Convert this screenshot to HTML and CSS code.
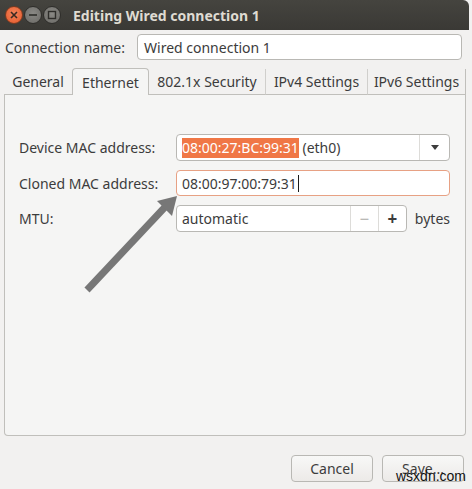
FILE: index.html
```html
<!DOCTYPE html>
<html>
<head>
<meta charset="utf-8">
<link rel="stylesheet" href="styles.css">
</head>
<body>
<div class="window">
  <div class="titlebar">
    <div class="wbtns">
      <span class="wb close"><svg width="8" height="8" viewBox="0 0 8 8"><path d="M1 1L7 7M7 1L1 7" stroke="#3a2a22" stroke-width="1.6"/></svg></span>
      <span class="wb"><svg width="10" height="8" viewBox="0 0 10 8"><path d="M1 4H9" stroke="#2e2d2a" stroke-width="1.6"/></svg></span>
      <span class="wb"><svg width="10" height="10" viewBox="0 0 10 10"><rect x="1.5" y="1.5" width="7" height="7" fill="none" stroke="#2e2d2a" stroke-width="1.4"/></svg></span>
    </div>
    <div class="title">Editing Wired connection 1</div>
  </div>
  <div class="body">
    <div class="namerow">
      <span class="lbl">Connection name:</span>
      <div class="entry name">Wired connection 1</div>
    </div>
    <div class="tabs">
      <div class="tab">General</div>
      <div class="tab active">Ethernet</div>
      <div class="tab">802.1x Security</div>
      <div class="tab sep">IPv4 Settings</div>
      <div class="tab sep">IPv6 Settings</div>
    </div>
    <div class="panel">
      <div class="form">
        <span class="lbl">Device MAC address:</span>
        <div class="combo">
          <div class="combo-text"><span class="sel">08:00:27:BC:99:31</span> (eth0)</div>
          <div class="combo-arrow"><svg width="10" height="6" viewBox="0 0 10 6"><path d="M1 0H9L5 5Z" fill="#3c3c3c"/></svg></div>
        </div>
        <span class="lbl">Cloned MAC address:</span>
        <div class="entry focus">08:00:97:00:79:31<span class="caret"></span></div>
        <span class="lbl">MTU:</span>
        <div class="spinrow">
          <div class="spin">
            <div class="spin-text">automatic</div>
            <div class="spin-btn minus">&#8722;</div>
            <div class="spin-btn plus">+</div>
          </div>
          <span class="unit">bytes</span>
        </div>
      </div>
    </div>
    <div class="actions">
      <div class="btn">Cancel</div>
      <div class="btn">Save...</div>
    </div>
  </div>
  <svg class="annot" width="472" height="489" viewBox="0 0 472 489">
    <line x1="87" y1="290" x2="166" y2="206" stroke="#777777" stroke-width="7"/>
    <polygon points="177,196 157,201 172,216" fill="#777777"/>
  </svg>
  <div class="wm">wsxdn.com</div>
</div>
</body>
</html>
```

FILE: styles.css
```css
* { box-sizing: border-box; }
html, body { margin: 0; padding: 0; }
body {
  font-family: "Noto Sans", "DejaVu Sans", sans-serif;
  font-size: 14px;
  color: #3c3c3c;
  background: #f2f1f0;
}
.window {
  position: relative;
  width: 472px;
  height: 489px;
  background: #f2f1f0;
  overflow: hidden;
}
.titlebar {
  height: 30px;
  width: 469px;
  background: linear-gradient(#45443f, #3a3935);
  border-top-right-radius: 6px;
  display: flex;
  align-items: center;
}
.wbtns {
  display: flex;
  gap: 1px;
  padding-left: 5px;
  width: 73px;
}
.wb {
  width: 18px;
  height: 18px;
  border-radius: 50%;
  background: radial-gradient(circle at 50% 40%, #8a8985, #6a6965);
  border: 1px solid #2f2e2b;
  display: flex;
  align-items: center;
  justify-content: center;
}
.wb.close {
  background: radial-gradient(circle at 50% 40%, #f4845a, #e4582a);
  border-color: #7a3a20;
}
.title {
  color: #dfdbd2;
  font-weight: bold;
  font-size: 14px;
}
.body {
  padding: 4px 6px 0 4px;
}
.namerow {
  display: flex;
  align-items: center;
  height: 26px;
}
.namerow .lbl {
  padding-left: 1px;
  width: 133px;
}
.entry {
  height: 26px;
  border: 1px solid #b9b8b4;
  border-radius: 4px;
  background: #ffffff;
  display: flex;
  align-items: center;
  padding-left: 6px;
  color: #3c3c3c;
}
.entry.name {
  width: 325px;
}
.tabs {
  display: flex;
  margin-top: 8px;
  height: 27px;
  align-items: flex-end;
}
.tab {
  height: 26px;
  display: flex;
  align-items: center;
  justify-content: center;
  padding: 0;
  color: #3c3c3c;
  border-bottom: 1px solid #c0bfbb;
}
.tab:first-child { width: 68px; }
.tab.active {
  height: 27px;
  background: #f5f5f4;
  border: 1px solid #c0bfbb;
  border-bottom: none;
  border-radius: 4px 4px 0 0;
  width: 77px;
}
.tab.sep { border-left: 1px solid #d0cfcc; }
.tab:nth-child(3) { width: 116px; }
.tab:nth-child(4) { width: 102px; }
.tab:nth-child(5) { width: 99px; border-right: 1px solid #c0bfbb; }
.panel {
  width: 462px;
  height: 341px;
  background: #f5f5f4;
  border: 1px solid #c0bfbb;
  border-top: none;
  border-radius: 0 0 4px 4px;
  padding: 39px 15px 0 14px;
}
.form {
  display: grid;
  grid-template-columns: 157px 274px;
  row-gap: 9px;
  align-items: center;
}
.combo {
  height: 27px;
  border: 1px solid #b9b8b4;
  border-radius: 4px;
  background: #ffffff;
  display: flex;
  align-items: stretch;
}
.combo-text {
  flex: 1;
  display: flex;
  align-items: center;
  padding-left: 5px;
  white-space: pre;
}
.sel {
  background: #f07746;
  color: #ffffff;
  padding: 1px 0;
  line-height: 18px;
}
.combo-arrow {
  width: 30px;
  border-left: 1px solid #dddcd9;
  display: flex;
  align-items: center;
  justify-content: center;
}
.entry.focus {
  height: 26px;
  border-color: #e7a184;
  padding-left: 5px;
}
.caret {
  display: inline-block;
  width: 1px;
  height: 17px;
  background: #1a1a1a;
  margin-left: 1px;
}
.spinrow {
  display: flex;
  align-items: center;
  gap: 8px;
}
.spin {
  width: 231px;
  height: 27px;
  border: 1px solid #b9b8b4;
  border-radius: 4px;
  background: #ffffff;
  display: flex;
}
.spin-text {
  flex: 1;
  display: flex;
  align-items: center;
  padding-left: 5px;
}
.spin-btn {
  width: 28px;
  display: flex;
  align-items: center;
  justify-content: center;
  border-left: 1px solid #dddcd9;
  font-size: 17px;
}
.spin-btn.minus { color: #aaa9a6; }
.spin-btn.plus { color: #3c3c3c; font-weight: bold; }
.unit { color: #3c3c3c; }
.actions {
  display: flex;
  justify-content: flex-end;
  gap: 9px;
  margin-top: 19px;
  padding-right: 2px;
}
.btn {
  width: 82px;
  height: 27px;
  border: 1px solid #b9b8b4;
  border-radius: 4px;
  background: linear-gradient(#f8f8f7, #eceae8);
  display: flex;
  align-items: center;
  justify-content: center;
  color: #3c3c3c;
}
.annot {
  position: absolute;
  top: 0;
  left: 0;
  pointer-events: none;
}
.wm {
  position: absolute;
  left: 396px;
  top: 468px;
  font-family: "Liberation Sans", sans-serif;
  font-size: 14px;
  color: #111111;
}
```
